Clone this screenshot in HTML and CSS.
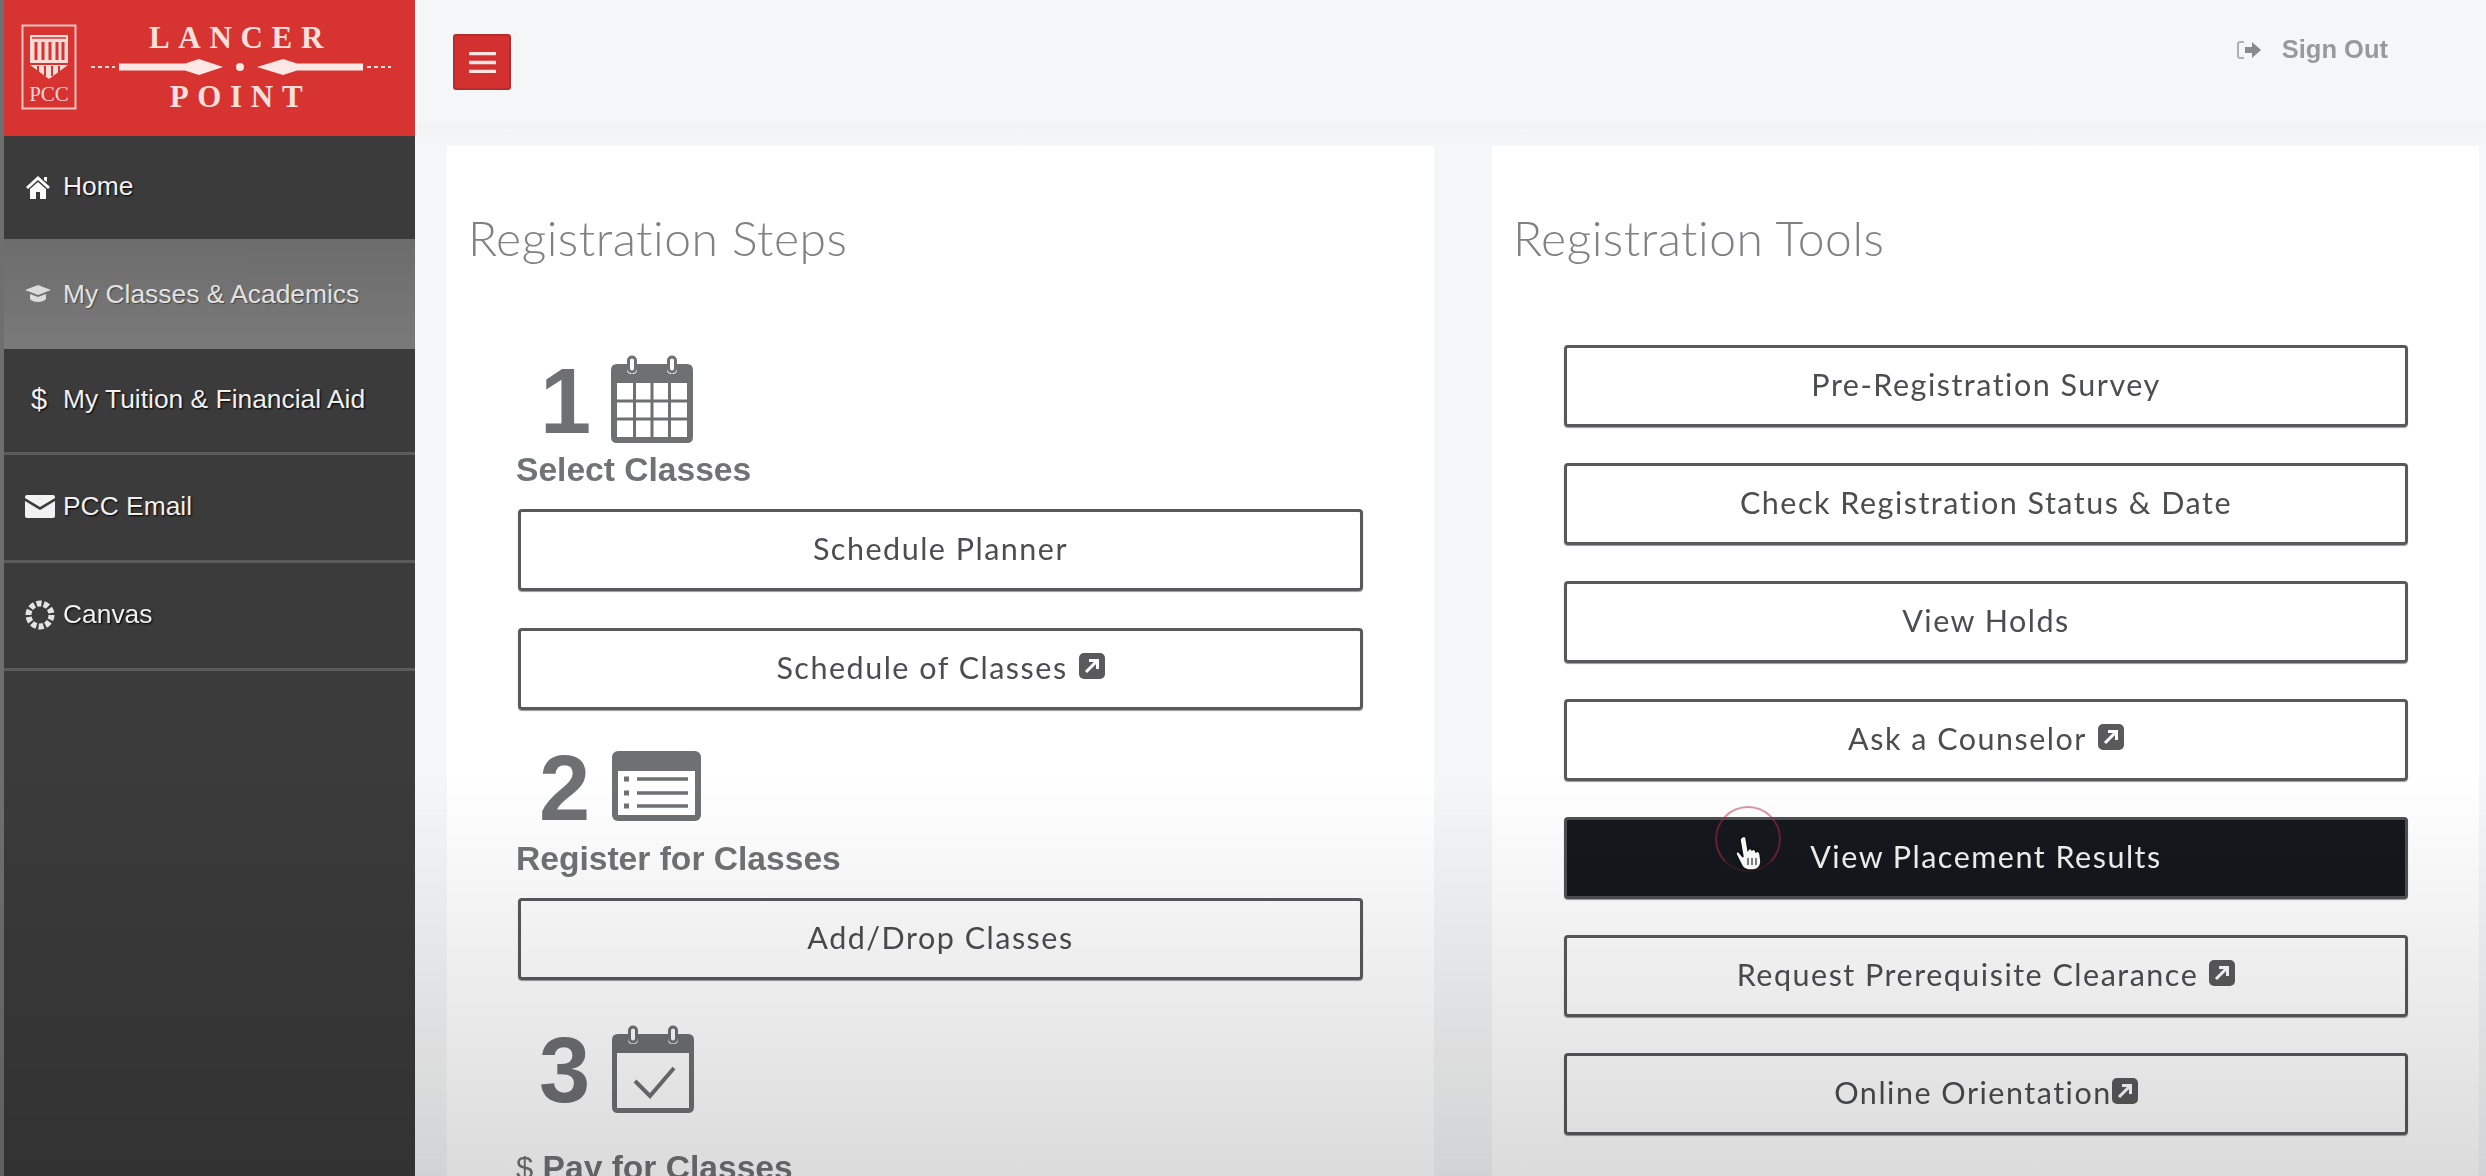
FILE: index.html
```html
<!DOCTYPE html>
<html>
    <head>
        <meta charset="utf-8" />
        <title>Lancer Point</title>
        <link rel="stylesheet" href="styles.css">
    </head>
    <body>
        <div class="app">
          <aside class="sidebar">
            <div class="brand">
              <svg class="crest" width="56" height="86" viewBox="0 0 56 86">
                <rect x="1.5" y="1.5" width="53" height="83" fill="none" stroke="#f3c4c0" stroke-width="2"/>
                <path d="M9 11 H47 V41 L28 55 L9 41 Z" fill="#f7dcd8"/>
                <path d="M15 18 V36 M22 18 V36 M29 18 V36 M36 18 V36 M42 18 V36" stroke="#d63331" stroke-width="3"/>
                <path d="M11 14 H45" stroke="#d63331" stroke-width="1.5"/>
                <path d="M9 40 H47" stroke="#d63331" stroke-width="2"/>
                <path d="M17 42 V49 M24 42 V52 M31 42 V52 M38 42 V49" stroke="#d63331" stroke-width="2"/>
                <text x="28" y="77" text-anchor="middle" class="crest-text">PCC</text>
              </svg>
              <div class="wordmark">
                <div class="word">LANCER</div>
                <svg class="divider" width="300" height="24" viewBox="0 0 300 24">
                  <path d="M0 12 H24" stroke="#f8dbd7" stroke-width="2" stroke-dasharray="4 3"/>
                  <path d="M28 8.500 H94 L108 4 L132 12 L108 20 L94 15.500 H28 Z" fill="#fbe7e4"/>
                  <circle cx="149" cy="12" r="4" fill="#fbe7e4"/>
                  <path d="M272 8.500 H206 L192 4 L166 12 L192 20 L206 15.500 H272 Z" fill="#fbe7e4"/>
                  <path d="M276 12 H300" stroke="#f8dbd7" stroke-width="2" stroke-dasharray="4 3"/>
                </svg>
                <div class="word">POINT</div>
              </div>
            </div>
            <nav class="nav">
              <a class="nav-item home">
                <span class="nav-icon">
                  <svg width="26" height="24" viewBox="0 0 26 24"><path d="M13 1 L25 12 L23 14 L13 5 L3 14 L1 12 Z M19 2 H22 V7 L19 5 Z M5 14 L13 7 L21 14 V24 H15 V17 H11 V24 H5 Z" fill="#fff"/></svg>
                </span>
                Home
              </a>
              <a class="nav-item active">
                <span class="nav-icon">
                  <svg width="26" height="20" viewBox="0 0 26 20"><path d="M13 1 L26 6 L13 11 L0 6 Z M5 10 L13 13 L21 10 V15 C18 19 8 19 5 15 Z" fill="#dcdcdc"/></svg>
                </span>
                My Classes &amp; Academics
              </a>
              <a class="nav-item">
                <span class="nav-icon dollar">$</span>
                My Tuition &amp; Financial Aid
              </a>
              <a class="nav-item lined">
                <span class="nav-icon">
                  <svg width="30" height="23" viewBox="0 0 30 23"><path d="M2 0 H28 Q30 0 30 2 V3 L15 12 L0 3 V2 Q0 0 2 0 Z M0 6 L15 15 L30 6 V21 Q30 23 28 23 H2 Q0 23 0 21 Z" fill="#f2f2f2"/></svg>
                </span>
                PCC Email
              </a>
              <a class="nav-item lined">
                <span class="nav-icon">
                  <svg width="30" height="30" viewBox="0 0 30 30">
                    <circle cx="15" cy="15" r="11.500" fill="none" stroke="#e4e4e4" stroke-width="6" stroke-dasharray="5 2.200"/>
                  </svg>
                </span>
                Canvas
              </a>
            </nav>
          </aside>

          <main class="main">
            <header class="topbar">
              <button class="menu-btn">
                <svg width="27" height="21" viewBox="0 0 27 21"><path d="M0 1.5 H27 M0 10.5 H27 M0 19.5 H27" stroke="#fbe3e1" stroke-width="3.4"/></svg>
              </button>
              <a class="sign-out">
                <svg width="25" height="22" viewBox="0 0 25 22">
                  <path d="M7 3 H3 Q1 3 1 5 V17 Q1 19 3 19 H7" fill="none" stroke="#b0b1b3" stroke-width="2"/>
                  <path d="M8 8 H15 V3 L24 11 L15 19 V14 H8 Z" fill="#8a8b8d"/>
                </svg>
                Sign Out
              </a>
            </header>

            <div class="cards">
              <section class="card">
                <h2>Registration Steps</h2>

                <div class="step step-one">
                  <span class="step-num">1</span>
                  <svg width="82" height="88" viewBox="0 0 82 88">
                    <path d="M6 9 H16 V15 Q16 19 21 19 Q26 19 26 15 V9 H56 V15 Q56 19 61 19 Q66 19 66 15 V9 H76 Q82 9 82 15 V82 Q82 88 76 88 H6 Q0 88 0 82 V15 Q0 9 6 9 Z" fill="#6f7072"/>
                    <rect x="17.500" y="2" width="7" height="15" rx="3.500" fill="none" stroke="#6f7072" stroke-width="3"/>
                    <rect x="57.500" y="2" width="7" height="15" rx="3.500" fill="none" stroke="#6f7072" stroke-width="3"/>
                    <path d="M6 28 H76 V82 H6 Z" fill="#fff"/>
                    <path d="M23.500 28 V82 M41 28 V82 M58.500 28 V82 M6 46 H76 M6 64 H76" stroke="#6f7072" stroke-width="3"/>
                  </svg>
                </div>
                <h3>Select Classes</h3>
                <a class="btn">Schedule Planner</a>
                <a class="btn">Schedule of Classes
                  <svg class="ext" width="26" height="26" viewBox="0 0 26 26"><rect width="26" height="26" rx="5" fill="#5a5a5c"/><path d="M7 19 L17 9 M10 7.500 H18.500 V16" fill="none" stroke="#fff" stroke-width="3"/></svg>
                </a>

                <div class="step step-two">
                  <span class="step-num">2</span>
                  <svg width="89" height="70" viewBox="0 0 89 70">
                    <rect width="89" height="70" rx="6" fill="#6f7072"/>
                    <rect x="6" y="20" width="77" height="44" fill="#fff"/>
                    <path d="M12 28 H17 M12 42 H17 M12 55 H17" stroke="#6f7072" stroke-width="5"/>
                    <path d="M25 28 H76 M25 42 H76 M25 55 H76" stroke="#6f7072" stroke-width="3.500"/>
                  </svg>
                </div>
                <h3>Register for Classes</h3>
                <a class="btn">Add/Drop Classes</a>

                <div class="step step-three">
                  <span class="step-num">3</span>
                  <svg width="82" height="88" viewBox="0 0 82 88">
                    <path d="M6 9 H16 V15 Q16 19 21 19 Q26 19 26 15 V9 H56 V15 Q56 19 61 19 Q66 19 66 15 V9 H76 Q82 9 82 15 V82 Q82 88 76 88 H6 Q0 88 0 82 V15 Q0 9 6 9 Z" fill="#6f7072"/>
                    <rect x="17.500" y="2" width="7" height="15" rx="3.500" fill="none" stroke="#6f7072" stroke-width="3"/>
                    <rect x="57.500" y="2" width="7" height="15" rx="3.500" fill="none" stroke="#6f7072" stroke-width="3"/>
                    <path d="M5 28 H77 V83 H5 Z" fill="#fff"/>
                    <path d="M23 56 L38 71 L62 43" fill="none" stroke="#6f7072" stroke-width="4"/>
                  </svg>
                </div>
                <h3><span class="thin">$</span> Pay for Classes</h3>
              </section>

              <section class="card card-tools">
                <h2>Registration Tools</h2>
                <div class="tools">
                  <a class="btn">Pre-Registration Survey</a>
                  <a class="btn">Check Registration Status &amp; Date</a>
                  <a class="btn">View Holds</a>
                  <a class="btn">Ask a Counselor
                    <svg class="ext" width="26" height="26" viewBox="0 0 26 26"><rect width="26" height="26" rx="5" fill="#5a5a5c"/><path d="M7 19 L17 9 M10 7.500 H18.500 V16" fill="none" stroke="#fff" stroke-width="3"/></svg>
                  </a>
                  <a class="btn btn-dark">View Placement Results
                    <span class="click-ring"></span>
                    <svg class="pointer" width="30" height="38" viewBox="0 0 30 38">
                      <path d="M8 3 Q11 1 12 4 L14 16 Q16 13 18 16 Q21 14 22 18 Q25 16 26 20 L27 28 Q26 35 20 36 H14 Q9 35 7 30 L2 20 Q2 17 5 18 L9 23 L6 6 Q6 4 8 3 Z" fill="#fff" stroke="#111" stroke-width="1.500"/>
                      <path d="M14 24 V31 M18 24 V31 M22 24 V31" stroke="#555" stroke-width="1.500"/>
                    </svg>
                  </a>
                  <a class="btn">Request Prerequisite Clearance
                    <svg class="ext" width="26" height="26" viewBox="0 0 26 26"><rect width="26" height="26" rx="5" fill="#5a5a5c"/><path d="M7 19 L17 9 M10 7.500 H18.500 V16" fill="none" stroke="#fff" stroke-width="3"/></svg>
                  </a>
                  <a class="btn btn-tight">Online Orientation<svg class="ext" width="26" height="26" viewBox="0 0 26 26"><rect width="26" height="26" rx="5" fill="#5a5a5c"/><path d="M7 19 L17 9 M10 7.500 H18.500 V16" fill="none" stroke="#fff" stroke-width="3"/></svg></a>
                </div>
              </section>
            </div>
          </main>
          <div class="fade"></div>
        </div>
    </body>
</html>
```

FILE: styles.css
```css
* {
  box-sizing: border-box;
}
html,
body {
  margin: 0;
  height: 100%;
  overflow: hidden;
  background: #f5f6f7;
}
h2,
h3 {
  margin: 0;
}

.app {
  position: relative;
  display: flex;
  height: 1176px;
  overflow: hidden;
  filter: blur(0.7px);
}

/* sidebar */
.sidebar {
  width: 415px;
  flex: none;
  background: #3c3b3c;
  border-left: 4px solid #6f6f70;
  font-family: "Liberation Sans", Arial, sans-serif;
}
.brand {
  height: 136px;
  background: #d63331;
  display: flex;
  align-items: center;
  padding-left: 17px;
  gap: 14px;
}
.crest {
  flex: none;
  margin-top: -2px;
}
.crest-text {
  font-family: "Liberation Serif", serif;
  font-size: 21px;
  fill: #f7d5d1;
}
.wordmark {
  width: 300px;
  text-align: center;
  margin-top: -2px;
}
.word {
  font-family: "Liberation Serif", serif;
  font-weight: bold;
  font-size: 31px;
  line-height: 34px;
  letter-spacing: 8.7px;
  margin-right: 1px;
  color: #f9e0dc;
}
.divider {
  display: block;
  margin: 0 auto 1px;
}
.nav-item {
  display: flex;
  align-items: center;
  height: 103px;
  padding-bottom: 2px;
  font-size: 26.4px;
  color: #f0f0f0;
  text-shadow: 1px 1px 2px #000;
}
.nav-item.active {
  height: 110px;
  padding-top: 2px;
  background: linear-gradient(#6c6c6c, #7a7a7a);
  color: #e2e2e2;
  text-shadow: 1px 1px 1px #444;
}
.nav-item.lined {
  height: 108px;
}
.nav-item.lined,
.nav-item.active + .nav-item {
  border-bottom: 3px solid #5b5b5b;
}
.nav-item.active + .nav-item {
  height: 106px;
}
.nav-icon {
  width: 59px;
  flex: none;
  padding-left: 21px;
  display: flex;
  align-items: center;
}
.dollar {
  padding-left: 27px;
  font-size: 29px;
}

/* top bar */
.main {
  flex: 1;
  min-width: 0;
  font-family: Lato, sans-serif;
}
.topbar {
  height: 146px;
  padding: 34px 98px 0 38px;
  display: flex;
  justify-content: space-between;
  align-items: flex-start;
  background: linear-gradient(#f5f6f7 122px, #f2f3f4 124px, #f5f6f7 146px);
}
.menu-btn {
  width: 58px;
  height: 56px;
  padding: 0;
  display: flex;
  align-items: center;
  justify-content: center;
  background: #d23130;
  border: 2px solid #b92b2b;
  border-radius: 3px;
}
.sign-out {
  display: flex;
  align-items: center;
  gap: 20px;
  margin-top: 1px;
  font-family: "Liberation Sans", Arial, sans-serif;
  font-weight: bold;
  font-size: 25.5px;
  color: #98999b;
}

/* cards */
.cards {
  display: grid;
  grid-template-columns: 987px 987px;
  gap: 58px;
  padding-left: 32px;
}
.card {
  height: 1030px;
  background: #fff;
  padding: 0 71px;
}
.card-tools {
  padding: 0 71px 0 72px;
}
.card h2 {
  font-weight: 300;
  font-size: 48px;
  line-height: 56px;
  letter-spacing: 0.5px;
  color: #808183;
  margin: 64px 0 0 -50px;
}
.card-tools h2 {
  margin-left: -51px;
}
.step {
  display: flex;
  align-items: flex-end;
  font-family: "Liberation Sans", Arial, sans-serif;
}
.step-num {
  font-weight: bold;
  font-size: 92px;
  line-height: 66px;
  color: #6f7072;
  display: block;
}
.step-one {
  margin-top: 89px;
  padding-left: 22px;
  gap: 20px;
}
.step-one .step-num {
  margin-bottom: 9px;
}
.step-two {
  margin-top: 41px;
  padding-left: 21px;
  gap: 22px;
}
.step-two .step-num {
  margin-bottom: 0;
}
.step-three {
  margin-top: 45px;
  padding-left: 21px;
  gap: 22px;
}
.step-three .step-num {
  margin-bottom: 10px;
}
.card h3 {
  font-family: "Liberation Sans", Arial, sans-serif;
  font-weight: bold;
  font-size: 33.6px;
  line-height: 34px;
  color: #717274;
  margin: 10px 0 22px -2px;
}
.step-two + h3 {
  margin-top: 21px;
}
.step-three + h3 {
  margin-top: 38px;
}
.thin {
  font-weight: normal;
  font-size: 31px;
}
.btn {
  position: relative;
  display: flex;
  align-items: center;
  justify-content: center;
  gap: 11px;
  height: 82px;
  margin-bottom: 37px;
  padding-bottom: 4px;
  background: transparent;
  border: 3px solid #58595b;
  border-radius: 4px;
  box-shadow: 0 1px 1px #999;
  font-size: 30.5px;
  letter-spacing: 1.5px;
  color: #4c4d4f;
}
.btn-tight {
  gap: 0;
}
.ext {
  flex: none;
  margin-top: -2px;
}
.btn-dark {
  background: #14171c;
  border-color: #4e4f52;
  color: #f1f1f1;
}
.tools {
  margin-top: 79px;
  display: flex;
  flex-direction: column;
  gap: 36px;
}
.tools .btn {
  margin: 0;
}

/* click marker over the dark button */
.click-ring {
  position: absolute;
  left: 148px;
  top: -14px;
  width: 66px;
  height: 66px;
  border: 2px solid rgba(190, 40, 75, 0.5);
  border-bottom-color: rgba(190, 40, 75, 0.2);
  border-radius: 50%;
}
.pointer {
  position: absolute;
  left: 167px;
  top: 14px;
}

/* darkening along the bottom of the frame */
.fade {
  position: absolute;
  left: 0;
  right: 0;
  bottom: 0;
  height: 400px;
  background: linear-gradient(rgba(0, 0, 0, 0), rgba(0, 0, 0, 0.14));
  pointer-events: none;
}
```
